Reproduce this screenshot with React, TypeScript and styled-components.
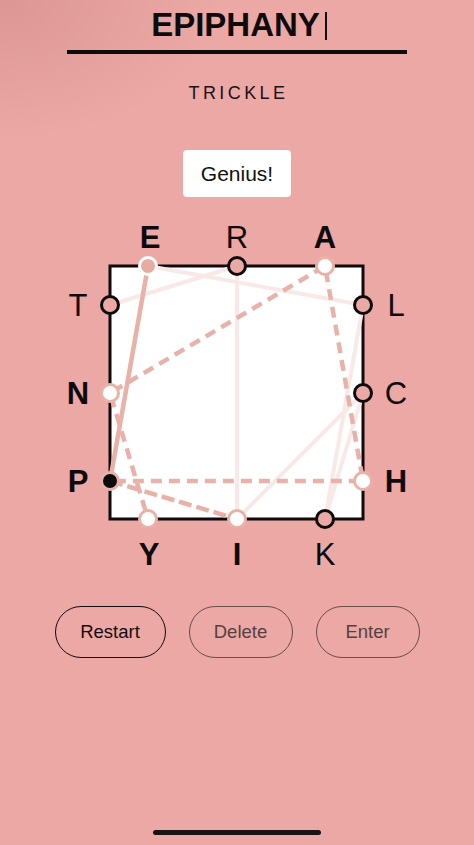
import React from "react";
import styled, { createGlobalStyle } from "styled-components";

const BG = "#eca8a5";
const PINK_LINE = "#e8b2a9";
const FAINT = "#f8e9e7";

const GlobalStyle = createGlobalStyle`
  html, body {
    margin: 0;
    padding: 0;
    background: ${BG};
  }
  body {
    font-family: "Liberation Sans", Arial, sans-serif;
    color: #111;
  }
`;

const Screen = styled.div`
  position: relative;
  width: 474px;
  height: 845px;
  overflow: hidden;
  display: flex;
  flex-direction: column;
  align-items: center;
  background:
    radial-gradient(ellipse 220px 140px at 0px 0px, rgba(190, 120, 118, 0.35), rgba(190, 120, 118, 0) 100%),
    ${BG};
`;

const TitleRow = styled.div`
  margin-top: 5px;
  height: 40px;
  display: flex;
  align-items: center;
  padding-left: 4px;
`;

const Title = styled.h1`
  margin: 0;
  font-size: 33px;
  line-height: 40px;
  font-weight: 700;
  letter-spacing: 0;
  color: #0d0b0b;
`;

const Cursor = styled.span`
  display: inline-block;
  width: 2px;
  height: 28px;
  margin-left: 5px;
  margin-top: 2px;
  background: #111;
`;

const Underline = styled.div`
  margin-top: 5px;
  width: 340px;
  height: 4px;
  background: #0d0b0b;
`;

const Previous = styled.div`
  margin-top: 27px;
  font-size: 18px;
  line-height: 24px;
  letter-spacing: 3.4px;
  padding-left: 3px;
  color: #1a1212;
`;

const Toast = styled.div`
  margin-top: 45px;
  width: 108px;
  height: 47px;
  display: flex;
  align-items: center;
  justify-content: center;
  background: #fff;
  border-radius: 4px;
  font-size: 21px;
  color: #111;
`;

const BoardSvg = styled.svg`
  margin-top: 15px;
  display: block;
`;

const Controls = styled.div`
  margin-top: 34px;
  display: flex;
  gap: 23px;
`;

const PillButton = styled.button<{ $width: number; $primary?: boolean }>`
  width: ${(p) => p.$width}px;
  height: 52px;
  border-radius: 26px;
  background: transparent;
  border: 1.5px solid ${(p) => (p.$primary ? "#140c0c" : "#6a4c4a")};
  color: ${(p) => (p.$primary ? "#140c0c" : "#56403e")};
  font-family: "Liberation Sans", Arial, sans-serif;
  font-size: 18.5px;
  padding: 0;
  cursor: pointer;
`;

const HomeIndicator = styled.div`
  position: absolute;
  left: 153px;
  bottom: 10px;
  width: 168px;
  height: 5px;
  border-radius: 3px;
  background: #1a1414;
`;

type Pt = [number, number];

const P: Record<string, Pt> = {
  E: [148, 266],
  R: [237, 266],
  A: [325, 266],
  T: [110, 305],
  N: [110, 393],
  P: [110, 481],
  L: [363, 305],
  C: [363, 393],
  H: [363, 481],
  Y: [148, 519],
  I: [237, 519],
  K: [325, 519],
};

type LetterState = "unused" | "used" | "first" | "current";

const letters: { ch: string; x: number; y: number; state: LetterState }[] = [
  { ch: "E", x: 150, y: 248, state: "first" },
  { ch: "R", x: 237, y: 248, state: "unused" },
  { ch: "A", x: 325, y: 248, state: "used" },
  { ch: "T", x: 78, y: 316, state: "unused" },
  { ch: "N", x: 78, y: 404, state: "used" },
  { ch: "P", x: 78, y: 492, state: "current" },
  { ch: "L", x: 396, y: 316, state: "unused" },
  { ch: "C", x: 396, y: 404, state: "unused" },
  { ch: "H", x: 396, y: 492, state: "used" },
  { ch: "Y", x: 149, y: 565, state: "used" },
  { ch: "I", x: 237, y: 565, state: "used" },
  { ch: "K", x: 325, y: 565, state: "unused" },
];

const pts = (word: string) => word.split("").map((c) => P[c].join(",")).join(" ");

function Board() {
  return (
    <BoardSvg width={360} height={360} viewBox="57 212 360 360">
      <rect x={110} y={266} width={253} height={253} fill="#ffffff" stroke="#0d0b0b" strokeWidth={3} />
      <polyline
        points={pts("TRICKLE")}
        fill="none"
        stroke={FAINT}
        strokeWidth={4}
        strokeLinejoin="round"
        strokeLinecap="round"
      />
      <line
        x1={P.E[0]}
        y1={P.E[1]}
        x2={P.P[0]}
        y2={P.P[1]}
        stroke={PINK_LINE}
        strokeWidth={4.5}
        strokeLinecap="round"
      />
      <polyline
        points={pts("PIPHANY")}
        fill="none"
        stroke={PINK_LINE}
        strokeWidth={4.5}
        strokeDasharray="11 7"
        strokeLinejoin="round"
      />
      {letters.map((l) => {
        const [cx, cy] = P[l.ch];
        const fill =
          l.state === "unused" ? BG : l.state === "current" ? "#0d0b0b" : l.state === "first" ? "#e6aca4" : "#ffffff";
        const stroke = l.state === "unused" ? "#0d0b0b" : l.state === "first" ? "#ffffff" : PINK_LINE;
        return <circle key={"c" + l.ch} cx={cx} cy={cy} r={8.5} fill={fill} stroke={stroke} strokeWidth={3} />;
      })}
      {letters.map((l) => (
        <text
          key={"t" + l.ch}
          x={l.x}
          y={l.y}
          textAnchor="middle"
          fontFamily='"Liberation Sans", Arial, sans-serif'
          fontSize={31}
          fontWeight={l.state === "unused" ? 400 : 700}
          fill="#0d0b0b"
        >
          {l.ch}
        </text>
      ))}
    </BoardSvg>
  );
}

export default function App() {
  return (
    <>
      <GlobalStyle />
      <Screen>
        <TitleRow>
          <Title>EPIPHANY</Title>
          <Cursor />
        </TitleRow>
        <Underline />
        <Previous>TRICKLE</Previous>
        <Toast>Genius!</Toast>
        <Board />
        <Controls>
          <PillButton $width={111} $primary>
            Restart
          </PillButton>
          <PillButton $width={104}>Delete</PillButton>
          <PillButton $width={104}>Enter</PillButton>
        </Controls>
        <HomeIndicator />
      </Screen>
    </>
  );
}
